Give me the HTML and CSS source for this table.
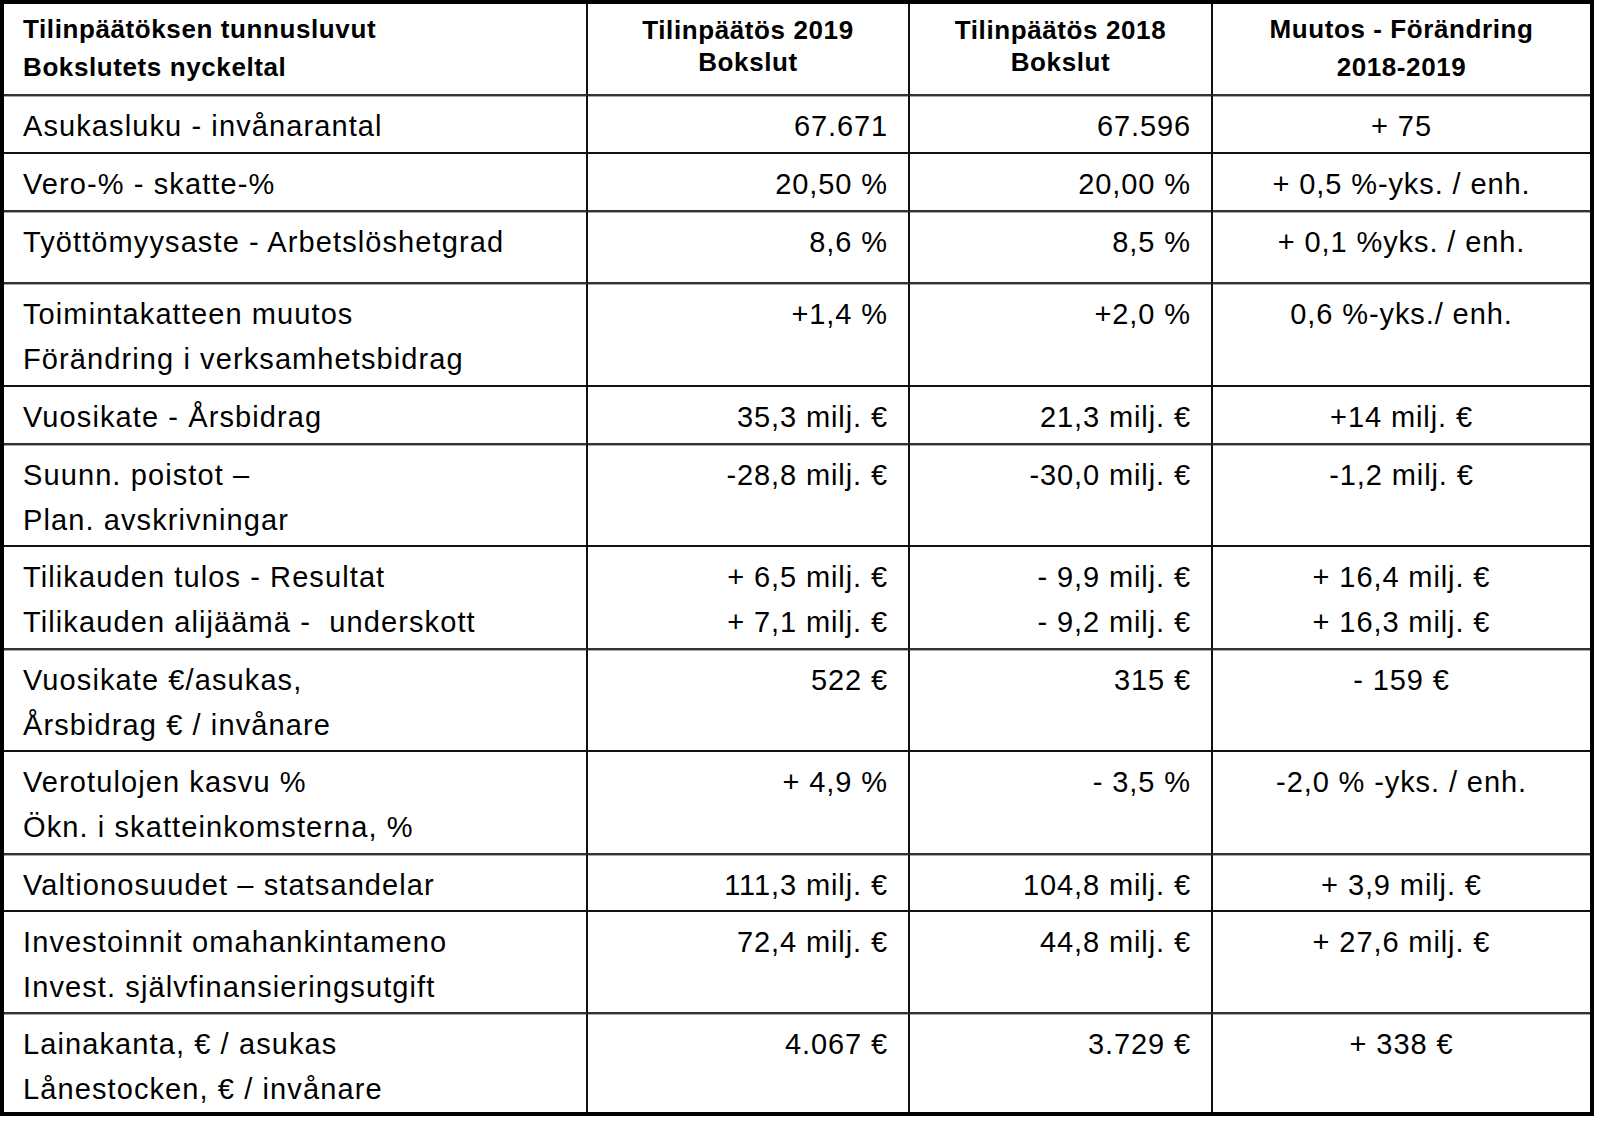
FILE: index.html
```html
<!DOCTYPE html>
<html lang="fi">
<head>
<meta charset="utf-8">
<title>Tilinpäätöksen tunnusluvut</title>
<link rel="stylesheet" href="styles.css">
</head>
<body>
<div class="sheet">
  <div class="c hd label wide soft">Tilinpäätöksen tunnusluvut<br>Bokslutets nyckeltal</div>
  <div class="c hd mid tight soft">Tilinpäätös 2019<br>Bokslut</div>
  <div class="c hd mid tight soft">Tilinpäätös 2018<br>Bokslut</div>
  <div class="c hd mid wide last soft">Muutos - Förändring<br>2018-2019</div>

  <div class="c label">Asukasluku - invånarantal</div>
  <div class="c num">67.671</div>
  <div class="c num">67.596</div>
  <div class="c mid last">+ 75</div>

  <div class="c label soft">Vero-% - skatte-%</div>
  <div class="c num soft">20,50 %</div>
  <div class="c num soft">20,00 %</div>
  <div class="c mid last soft">+ 0,5 %-yks. / enh.</div>

  <div class="c label soft">Työttömyysaste - Arbetslöshetgrad</div>
  <div class="c num soft">8,6 %</div>
  <div class="c num soft">8,5 %</div>
  <div class="c mid last soft">+ 0,1 %yks. / enh.</div>

  <div class="c label">Toimintakatteen muutos<br>Förändring i verksamhetsbidrag</div>
  <div class="c num">+1,4 %</div>
  <div class="c num">+2,0 %</div>
  <div class="c mid last">0,6 %-yks./ enh.</div>

  <div class="c label soft">Vuosikate - Årsbidrag</div>
  <div class="c num soft">35,3 milj. €</div>
  <div class="c num soft">21,3 milj. €</div>
  <div class="c mid last soft">+14 milj. €</div>

  <div class="c label">Suunn. poistot –<br>Plan. avskrivningar</div>
  <div class="c num">-28,8 milj. €</div>
  <div class="c num">-30,0 milj. €</div>
  <div class="c mid last">-1,2 milj. €</div>

  <div class="c label soft">Tilikauden tulos - Resultat<br>Tilikauden alijäämä - &nbsp;underskott</div>
  <div class="c num soft">+ 6,5 milj. €<br>+ 7,1 milj. €</div>
  <div class="c num soft">- 9,9 milj. €<br>- 9,2 milj. €</div>
  <div class="c mid last soft">+ 16,4 milj. €<br>+ 16,3 milj. €</div>

  <div class="c label">Vuosikate €/asukas,<br>Årsbidrag € / invånare</div>
  <div class="c num">522 €</div>
  <div class="c num">315 €</div>
  <div class="c mid last">- 159 €</div>

  <div class="c label soft">Verotulojen kasvu %<br>Ökn. i skatteinkomsterna, %</div>
  <div class="c num soft">+ 4,9 %</div>
  <div class="c num soft">- 3,5 %</div>
  <div class="c mid last soft">-2,0 % -yks. / enh.</div>

  <div class="c label">Valtionosuudet – statsandelar</div>
  <div class="c num">111,3 milj. €</div>
  <div class="c num">104,8 milj. €</div>
  <div class="c mid last">+ 3,9 milj. €</div>

  <div class="c label soft">Investoinnit omahankintameno<br>Invest. självfinansieringsutgift</div>
  <div class="c num soft">72,4 milj. €</div>
  <div class="c num soft">44,8 milj. €</div>
  <div class="c mid last soft">+ 27,6 milj. €</div>

  <div class="c label end">Lainakanta, € / asukas<br>Lånestocken, € / invånare</div>
  <div class="c num end">4.067 €</div>
  <div class="c num end">3.729 €</div>
  <div class="c mid last end">+ 338 €</div>
</div>
</body>
</html>
```

FILE: styles.css
```css
html, body {
  margin: 0;
  padding: 0;
  background: #ffffff;
}

body {
  font-family: "Liberation Sans", Arial, sans-serif;
  color: #000000;
}

.sheet {
  display: grid;
  box-sizing: border-box;
  width: 1594px;
  border: 4px solid #000000;
  grid-template-columns: 584px 322px 303px 377px;
  grid-template-rows: 92px 58px 58px 72px 103px 58px 102px 103px 102px 103px 57px 102px 98px;
}

.c {
  box-sizing: border-box;
  border-right: 2px solid #111111;
  border-bottom: 2px solid #111111;
  padding: 8px 20px 0 19px;
  font-size: 29px;
  letter-spacing: 0.9px;
  line-height: 45px;
  white-space: nowrap;
  overflow: visible;
}

.soft {
  border-bottom-color: #333333;
  box-shadow: 0 1px 0 #a8a8a8;
}

.label {
  text-align: left;
  letter-spacing: 1.1px;
}

.num {
  text-align: right;
}

.mid {
  text-align: center;
  padding-left: 4px;
  padding-right: 4px;
}

.last {
  border-right: none;
}

.end {
  border-bottom: none;
}

.hd {
  font-weight: bold;
  font-size: 26px;
  letter-spacing: 0.6px;
}

.hd.wide {
  line-height: 38px;
  padding-top: 6px;
}

.hd.tight {
  line-height: 32px;
  padding-top: 10px;
}
```
